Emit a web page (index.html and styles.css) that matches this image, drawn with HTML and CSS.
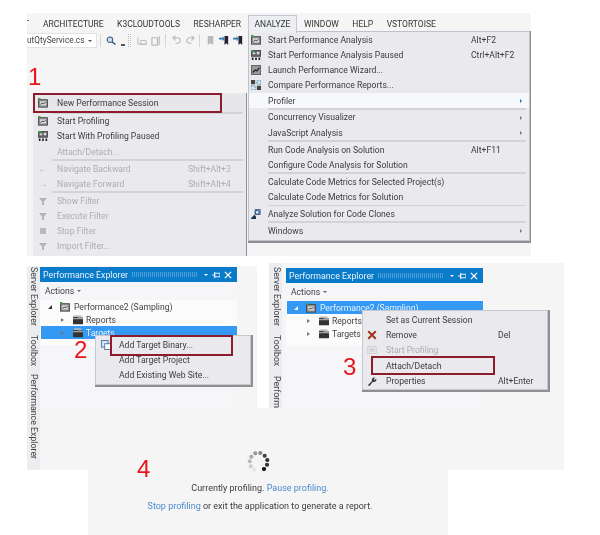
FILE: index.html
```html
<!DOCTYPE html>
<html lang="en">
<head>
<meta charset="utf-8">
<title>Performance Explorer steps</title>
<link rel="stylesheet" href="styles.css">
</head>
<body>
<svg class="defs" width="0" height="0" aria-hidden="true">
  <symbol id="perf" viewBox="0 0 12 12">
    <rect x="0.5" y="2" width="11" height="9" fill="#8d8d8d" stroke="#444"/>
    <rect x="2.5" y="4" width="7" height="5" fill="#ddd"/>
    <path d="M3 8l2-2 2 1 2-2" fill="none" stroke="#222"/>
    <rect x="0" y="0" width="3" height="2" fill="#4a9a4a"/>
  </symbol>
  <symbol id="perf2" viewBox="0 0 12 12">
    <rect x="0.5" y="0.5" width="11" height="7" fill="#666" stroke="#444"/>
    <path d="M2 3h3v2H2zM7 2h3v3H7z" fill="#ddd"/>
    <path d="M1 9h2v3H1zM5 9h2v3H5zM9 9h2v3H9z" fill="#222"/>
    <rect x="0" y="0" width="4" height="2" fill="#3f9a4a"/>
  </symbol>
  <symbol id="wiz" viewBox="0 0 12 12">
    <rect x="0.5" y="0.5" width="11" height="11" fill="#999" stroke="#555"/>
    <path d="M2 9l3-3 2 1 3-4" fill="none" stroke="#222" stroke-width="1.5"/>
  </symbol>
  <symbol id="cmp" viewBox="0 0 12 12">
    <path d="M0 0h5v5H0zM7 7h5v5H7z" fill="#444"/>
    <path d="M7 1h5v4H7zM0 7h5v5H0z" fill="none" stroke="#2c7bb8" stroke-dasharray="2 1"/>
  </symbol>
  <symbol id="clone" viewBox="0 0 12 12">
    <rect x="5" y="0.5" width="6" height="6" fill="#dfe6ef" stroke="#556"/>
    <circle cx="7.5" cy="4" r="2.5" fill="none" stroke="#1c5fa8" stroke-width="1.4"/>
    <path d="M0 11l4-4 2 2v3H0z" fill="#234"/>
  </symbol>
  <symbol id="folder" viewBox="0 0 12 12">
    <path d="M0 2h5l1 1h6v8H0z" fill="#333"/>
    <rect x="1" y="0.5" width="9" height="2" fill="#bbb"/>
    <rect x="0" y="4" width="12" height="1" fill="#ddd"/>
  </symbol>
  <symbol id="funnel" viewBox="0 0 10 10">
    <path d="M1 2h8L6 5.500V9H4V5.500z" fill="#b4b4b8"/>
  </symbol>
</svg>

<section class="shot shot-top">
  <nav class="menubar">
    <span class="menu-cut">T</span>
    <span class="menu-item">ARCHITECTURE</span>
    <span class="menu-item">K3CLOUDTOOLS</span>
    <span class="menu-item">RESHARPER</span>
    <span class="menu-item menu-open">ANALYZE</span>
    <span class="menu-item">WINDOW</span>
    <span class="menu-item">HELP</span>
    <span class="menu-item">VSTORTOISE</span>
  </nav>
  <div class="toolbar">
    <span class="combo">utQtyService.cs<i class="combo-arrow"></i></span>
    <span class="tool-sep"></span>
    <svg class="tool" viewBox="0 0 14 12"><circle cx="5" cy="5" r="3.500" fill="#cfe0ef" stroke="#2d5f8f" stroke-width="1.300"/><path d="M8 8l4 3" stroke="#1d3f5f" stroke-width="1.600"/></svg>
    <i class="tool-drop"></i>
    <i class="tool-grip"></i>
    <svg class="tool tool-dim" viewBox="0 0 12 12"><path d="M1 2v8h10M4 6h6v4H4z" fill="none" stroke="#b9b9bd"/></svg>
    <svg class="tool tool-dim" viewBox="0 0 12 12"><path d="M1 3h6v8H1zM9 1v10" fill="none" stroke="#b9b9bd" stroke-width="1.300"/></svg>
    <span class="tool-sep"></span>
    <svg class="tool tool-dim" viewBox="0 0 12 12"><path d="M2 3h5a3 3 0 0 1 0 6H5M2 3l3-2M2 3l3 3" fill="none" stroke="#b9b9bd" stroke-width="1.200"/></svg>
    <svg class="tool tool-dim" viewBox="0 0 12 12"><path d="M10 3H5a3 3 0 0 0 0 6h2M10 3L7 1M10 3L7 6" fill="none" stroke="#b9b9bd" stroke-width="1.200"/></svg>
    <span class="tool-sep"></span>
    <svg class="tool tool-dim" viewBox="0 0 12 12"><path d="M3 1h6v10L6 9l-3 2z" fill="#b9b9bd"/></svg>
    <svg class="tool" viewBox="0 0 12 12"><path d="M6 1h4v10L8 9l-2 2z" fill="#223"/><path d="M0 3h4V1l2 3-2 3V5H0z" fill="#2a7ab8"/></svg>
    <svg class="tool" viewBox="0 0 12 12"><path d="M6 1h4v10L8 9l-2 2z" fill="#223"/><path d="M0 3h4V1l2 3-2 3V5H0z" fill="#2a7ab8"/></svg>
  </div>

  <span class="step step-1">1</span>

  <div class="menu menu-left">
    <div class="row row-soft"><svg class="ico"><use href="#perf"/></svg><span>New Performance Session</span></div>
    <div class="sep"></div>
    <div class="row"><svg class="ico"><use href="#perf"/></svg><span>Start Profiling</span></div>
    <div class="row"><svg class="ico"><use href="#perf2"/></svg><span>Start With Profiling Paused</span></div>
    <div class="row off"><i class="ico"></i><span>Attach/Detach...</span></div>
    <div class="sep"></div>
    <div class="row off"><span class="ico glyph">←</span><span>Navigate Backward</span><span class="key">Shift+Alt+3</span></div>
    <div class="row off"><span class="ico glyph">→</span><span>Navigate Forward</span><span class="key">Shift+Alt+4</span></div>
    <div class="sep"></div>
    <div class="row off"><svg class="ico"><use href="#funnel"/></svg><span>Show Filter</span></div>
    <div class="row off"><svg class="ico"><use href="#funnel"/></svg><span>Execute Filter</span></div>
    <div class="row off"><span class="ico"><i class="square"></i></span><span>Stop Filter</span></div>
    <div class="row off"><svg class="ico"><use href="#funnel"/></svg><span>Import Filter...</span></div>
  </div>
  <div class="mark mark-1"></div>

  <div class="menu menu-right">
    <div class="row"><svg class="ico"><use href="#perf"/></svg><span>Start Performance Analysis</span><span class="key">Alt+F2</span></div>
    <div class="row"><svg class="ico"><use href="#perf2"/></svg><span>Start Performance Analysis Paused</span><span class="key">Ctrl+Alt+F2</span></div>
    <div class="row"><svg class="ico"><use href="#wiz"/></svg><span>Launch Performance Wizard...</span></div>
    <div class="row"><svg class="ico"><use href="#cmp"/></svg><span>Compare Performance Reports...</span></div>
    <div class="row row-hot"><i class="ico"></i><span>Profiler</span><i class="arrow arrow-hot"></i></div>
    <div class="sep"></div>
    <div class="row"><i class="ico"></i><span>Concurrency Visualizer</span><i class="arrow"></i></div>
    <div class="row"><i class="ico"></i><span>JavaScript Analysis</span><i class="arrow"></i></div>
    <div class="sep"></div>
    <div class="row"><i class="ico"></i><span>Run Code Analysis on Solution</span><span class="key">Alt+F11</span></div>
    <div class="row"><i class="ico"></i><span>Configure Code Analysis for Solution</span></div>
    <div class="sep"></div>
    <div class="row"><i class="ico"></i><span>Calculate Code Metrics for Selected Project(s)</span></div>
    <div class="row"><i class="ico"></i><span>Calculate Code Metrics for Solution</span></div>
    <div class="sep"></div>
    <div class="row"><svg class="ico"><use href="#clone"/></svg><span>Analyze Solution for Code Clones</span></div>
    <div class="sep"></div>
    <div class="row"><i class="ico"></i><span>Windows</span><i class="arrow"></i></div>
  </div>
</section>

<section class="shot shot-back"></section>

<section class="shot shot-a">
  <div class="sidetabs">
    <span class="sidetab tab-server">Server Explorer</span>
    <span class="sidetab tab-toolbox">Toolbox</span>
    <span class="sidetab tab-perf">Performance Explorer</span>
  </div>
  <div class="pane">
    <header class="pane-head"><span>Performance Explorer</span><i class="grip"></i><b class="caret"></b><svg class="pin" viewBox="0 0 9 9"><path d="M0 4.500h3M3 2.500h6v4H3zM3 1v7" fill="none" stroke="#fff"/></svg><svg class="close" viewBox="0 0 9 9"><path d="M1 1l7 7M8 1L1 8" stroke="#fff" stroke-width="1.500"/></svg></header>
    <div class="actions">Actions <b class="caret caret-dark"></b></div>
    <ul class="tree">
      <li class="node"><i class="exp exp-open"></i><svg class="node-ico"><use href="#perf"/></svg><span>Performance2 (Sampling)</span></li>
      <li class="node node-child"><i class="exp"></i><svg class="node-ico"><use href="#folder"/></svg><span>Reports</span></li>
      <li class="node node-child node-sel"><i class="exp"></i><svg class="node-ico"><use href="#folder"/></svg><span>Targets</span></li>
    </ul>
  </div>
  <span class="step step-2">2</span>
  <div class="ctx ctx-a">
    <div class="ctx-row"><svg class="ctx-ico" viewBox="0 0 12 12"><rect x="0.500" y="0.500" width="8" height="8" fill="#d7e4f2" stroke="#47679a"/><rect x="4.500" y="4.500" width="7" height="7" fill="#fff" stroke="#47679a"/></svg><span>Add Target Binary...</span></div>
    <div class="ctx-row"><i class="ctx-ico"></i><span>Add Target Project</span></div>
    <div class="ctx-row"><i class="ctx-ico"></i><span>Add Existing Web Site...</span></div>
  </div>
  <div class="mark mark-2"></div>
</section>

<section class="shot shot-b">
  <div class="sidetabs">
    <span class="sidetab tab-server">Server Explorer</span>
    <span class="sidetab tab-toolbox">Toolbox</span>
    <span class="sidetab tab-perf">Perform</span>
  </div>
  <div class="pane">
    <header class="pane-head"><span>Performance Explorer</span><i class="grip"></i><b class="caret"></b><svg class="pin" viewBox="0 0 9 9"><path d="M0 4.500h3M3 2.500h6v4H3zM3 1v7" fill="none" stroke="#fff"/></svg><svg class="close" viewBox="0 0 9 9"><path d="M1 1l7 7M8 1L1 8" stroke="#fff" stroke-width="1.500"/></svg></header>
    <div class="actions">Actions <b class="caret caret-dark"></b></div>
    <ul class="tree">
      <li class="node node-sel"><i class="exp exp-open exp-white"></i><svg class="node-ico"><use href="#perf"/></svg><span>Performance2 (Sampling)</span></li>
      <li class="node node-child"><i class="exp"></i><svg class="node-ico"><use href="#folder"/></svg><span>Reports</span></li>
      <li class="node node-child"><i class="exp"></i><svg class="node-ico"><use href="#folder"/></svg><span>Targets</span></li>
    </ul>
  </div>
  <span class="step step-3">3</span>
  <div class="ctx ctx-b">
    <div class="ctx-row"><i class="ctx-ico"></i><span>Set as Current Session</span></div>
    <div class="ctx-row"><svg class="ctx-ico" viewBox="0 0 12 12"><path d="M1.500 1.500l9 9M10.500 1.500l-9 9" stroke="#a5301f" stroke-width="2.400"/></svg><span>Remove</span><span class="key">Del</span></div>
    <div class="ctx-row off"><svg class="ctx-ico" viewBox="0 0 12 12"><rect x="1" y="2" width="10" height="8" fill="none" stroke="#c9c9cc"/><rect x="3" y="4" width="6" height="4" fill="#d2d2d5"/></svg><span>Start Profiling</span></div>
    <div class="ctx-row"><i class="ctx-ico"></i><span>Attach/Detach</span></div>
    <div class="ctx-row"><svg class="ctx-ico" viewBox="0 0 12 12"><path d="M1 11l5-5a3 3 0 0 1 4-4L8 4l1 1 2-2a3 3 0 0 1-4 4l-4 5z" fill="#333"/></svg><span>Properties</span><span class="key">Alt+Enter</span></div>
  </div>
  <div class="mark mark-3"></div>
</section>

<section class="shot shot-c">
  <span class="step step-4">4</span>
  <div class="spinner"></div>
  <p class="status">Currently profiling. <a class="link">Pause profiling.</a></p>
  <p class="status"><a class="link">Stop profiling</a> or exit the application to generate a report.</p>
</section>
</body>
</html>
```
FILE: styles.css
```css
* { box-sizing: border-box; }
html, body { margin: 0; padding: 0; background: #fff; }
body { width: 600px; height: 535px; position: relative; overflow: hidden; font: 8.600px Roboto, "Open Sans", sans-serif; color: #3c3c3f; }
.defs { position: absolute; }
i { display: block; font-style: normal; }
.shot { position: absolute; background: #f5f5f6; overflow: hidden; filter: blur(0.3px); }

/* top capture */
.shot-top { left: 27px; top: 13px; width: 504px; height: 243px; }
.menubar { height: 20px; display: flex; align-items: center; padding-top: 2px; font-size: 8.500px; color: #333; }
.menu-cut { width: 12.250px; margin-left: -3px; }
.menu-item { padding: 0 6.750px; height: 18px; line-height: 19px; }
.menu-open { background: #eceef2; border: 1px solid #c4c8d4; border-bottom: 0; padding: 0 5.750px; line-height: 17px; z-index: 3; }
.toolbar { height: 15px; display: flex; align-items: center; gap: 3px; }
.combo { width: 70px; height: 15px; background: #fff; border: 1px solid #e3e3e6; border-left: 0; line-height: 13px; font-size: 8.300px; display: flex; position: relative; color: #444; }
.combo-arrow { position: absolute; right: 4px; top: 6px; border: 2px solid transparent; border-top-color: #555; }
.tool-sep { width: 1px; height: 13px; background: #d5d5d8; margin-right: 2px; }
.tool { width: 11px; height: 11px; flex: none; }
.tool-drop { width: 4px; height: 2px; background: #555; margin: 8px 0 0 1px; }
.tool-grip { width: 3px; height: 13px; margin-right: 3px; border-left: 1px dotted #bbb; border-right: 1px dotted #bbb; }

.step { position: absolute; color: #e8141c; font-family: "Liberation Sans", sans-serif; font-size: 24px; line-height: 24px; z-index: 6; }
.step-1 { left: 1px; top: 52px; }
.step-2 { left: 47px; top: 72px; }
.step-3 { left: 74px; top: 92px; }
.step-4 { left: 49px; top: -13px; }

.menu { position: absolute; background: #e9e9ee; }
.menu-left { left: 6px; top: 80px; width: 214px; height: 180px; padding-top: 1px; border-right: 1px solid #8f8f93; z-index: 1; }
.menu-right { left: 221px; top: 18px; width: 282px; height: 210px; border: 1px solid #bfc2cd; box-shadow: 1px 1px 0 1px #8e8e92; z-index: 2; }
.row { height: 15.250px; display: flex; align-items: center; white-space: nowrap; padding-right: 3px; position: relative; }
.ico { width: 10px; height: 10px; margin: 0 9px 0 5px; flex: none; display: block; }
.menu-right .ico { margin: 0 7px 0 2px; }
.key { position: absolute; left: 222px; }
.menu-left .key { left: 155px; }
.row-soft { height: 18px; background: #e7e7eb; }
.row-hot { background: #f7f8fa; }
.off { color: #adadb2; }
.glyph { font-size: 10px; color: #b2b2b6; line-height: 10px; }
.square { width: 6px; height: 6px; margin: 2px; background: #b9b9bd; }
.sep { height: 1.600px; margin-left: 19px; margin-right: 3px; background: #d2d3da; }
.arrow { position: absolute; right: 7px; top: 6px; border: 2px solid transparent; border-left-color: #777; border-right: 0; }
.arrow-hot { border-left-color: #1b78c8; }

.mark { position: absolute; border: 2px solid #8c1c2e; z-index: 5; }
.mark-1 { left: 6px; top: 80px; width: 189px; height: 20px; }
.mark-2 { left: 83px; top: 69px; width: 123px; height: 21px; }
.mark-3 { left: 102px; top: 93px; width: 124px; height: 19px; }

/* explorer captures */
.shot-back { left: 27px; top: 408px; width: 537px; height: 62px; }
.shot-a { left: 27px; top: 266px; width: 230px; height: 204px; }
.shot-b { left: 269px; top: 263px; width: 295px; height: 145px; }
.sidetabs { position: absolute; left: 0; top: 0; bottom: 0; width: 13px; background: #ecedf1; }
.sidetab { position: absolute; left: 1px; writing-mode: vertical-rl; font-size: 8.800px; line-height: 11px; white-space: nowrap; color: #444; }
.tab-server { top: 1px; }
.tab-toolbox { top: 69px; }
.tab-perf { top: 108px; }
.pane { position: absolute; left: 13px; top: 1px; width: 197px; height: 141px; background: #f6f6f8; }
.shot-b .pane { left: 17px; top: 5px; }
.shot-b .sidetab { left: 2px; }
.shot-b .tab-server { top: 4px; }
.shot-b .tab-toolbox { top: 72px; }
.shot-b .tab-perf { top: 113px; }
.pane-head { height: 15px; background: #0a7bc8; color: #e8f3fb; display: flex; align-items: center; padding: 0 5px 0 3px; font-size: 8.800px; }
.grip { flex: 1; height: 5px; margin: 0 6px 0 4px; background: repeating-linear-gradient(90deg, #4b9ed8 0 1px, transparent 1px 2px); }
.caret { width: 0; height: 0; border: 2.500px solid transparent; border-top-color: #fff; border-bottom: 0; margin-right: 4px; display: inline-block; }
.caret-dark { border-top-color: #666; margin: 0 0 2px 1px; }
.pin { width: 8px; height: 8px; margin-right: 4px; }
.close { width: 8px; height: 8px; }
.actions { height: 18px; padding-left: 5px; line-height: 18px; }
.tree { list-style: none; margin: 0; padding: 0 0 6px 1px; background: #fbfbfc; }
.node { height: 13px; display: flex; align-items: center; padding-left: 7px; white-space: nowrap; color: #444; }
.node-child { padding-left: 20px; }
.node-sel { background: #3399f3; color: #eaf4ff; }
.exp { width: 0; height: 0; border: 2.500px solid transparent; border-left: 3px solid #777; border-right: 0; margin-right: 9px; }
.exp-open { border: 0; border-bottom: 4px solid #333; border-left: 4px solid transparent; margin-right: 8px; }
.exp-white { border-bottom-color: #f2f8ff; }
.node-ico { width: 10px; height: 10px; margin-right: 4px; flex: none; }
.node-child .node-ico { margin-right: 3px; }

.ctx { position: absolute; background: #e9e9ee; border: 1px solid #c6c8d0; box-shadow: 1px 1px 0 1px #909094; padding: 1px 0; z-index: 4; }
.ctx-a { left: 68px; top: 69px; width: 156px; height: 50px; }
.ctx-b { left: 93px; top: 47px; width: 186px; height: 80px; }
.ctx-row { height: 15.300px; display: flex; align-items: center; white-space: nowrap; position: relative; }
.ctx-ico { width: 10px; height: 10px; margin: 0 8px 0 5px; flex: none; }
.ctx-b .ctx-ico { margin: 0 9px 0 4px; }
.ctx-b .key { left: 135px; }

/* profiling */
.shot-c { left: 88px; top: 470px; width: 360px; height: 65px; overflow: visible; text-align: center; padding: 13px 16px 0 0; font-size: 9px; }
.status { margin: 0 0 7px; line-height: 11px; }
.link { color: #4a8ccc; }
.spinner { position: absolute; left: 174px; top: -3px; width: 3.500px; height: 3.500px; border-radius: 50%; background: #111; box-shadow: 3px -4.300px 0 #333, 3.300px -9px 0 #333, 0.700px -13.300px 0 #444, -3.700px -16px 0 #888, -8.700px -15.700px 0 #999, -12.700px -12.300px 0 #aaa, -14.300px -7.700px 0 #bbb, -13.300px -2.700px 0 #ccc, -9.700px 0.700px 0 #e5e5e5; }
```
